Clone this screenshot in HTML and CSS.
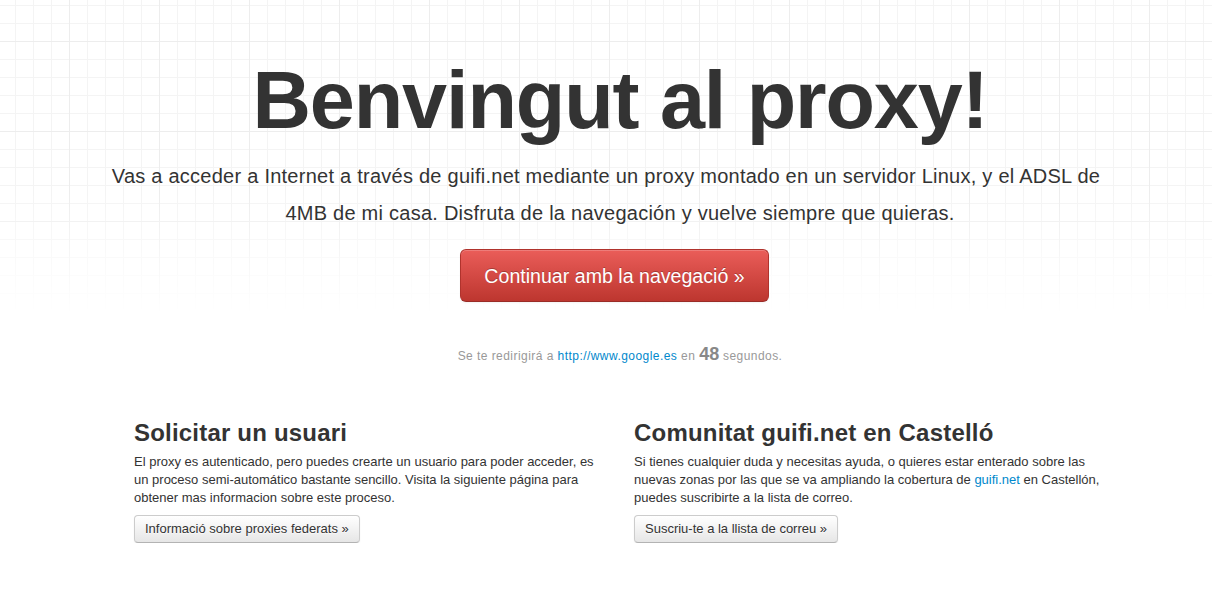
FILE: index.html
```html
<!DOCTYPE html>
<html lang="ca">
<head>
<meta charset="utf-8">
<title>Benvingut al proxy!</title>
<link rel="stylesheet" href="styles.css">
</head>
<body>
<header class="masthead">
  <h1 class="masthead-title">Benvingut al proxy!</h1>
  <p class="masthead-lead">Vas a acceder a Internet a través de guifi.net mediante un proxy montado en un servidor Linux, y el ADSL de 4MB de mi casa. Disfruta de la navegación y vuelve siempre que quieras.</p>
  <a class="btn-danger-large" href="#">Continuar amb la navegació »</a>
  <p class="redirect">Se te redirigirá a <a class="link" href="#">http://www.google.es</a> en <strong class="countdown">48</strong> segundos.</p>
</header>
<section class="features">
  <div class="feature">
    <h2 class="feature-title">Solicitar un usuari</h2>
    <p class="feature-text">El proxy es autenticado, pero puedes crearte un usuario para poder acceder, es un proceso semi-automático bastante sencillo. Visita la siguiente página para obtener mas informacion sobre este proceso.</p>
    <a class="btn" href="#">Informació sobre proxies federats »</a>
  </div>
  <div class="feature">
    <h2 class="feature-title">Comunitat guifi.net en Castelló</h2>
    <p class="feature-text">Si tienes cualquier duda y necesitas ayuda, o quieres estar enterado sobre las nuevas zonas por las que se va ampliando la cobertura de <a class="link" href="#">guifi.net</a> en Castellón, puedes suscribirte a la lista de correo.</p>
    <a class="btn" href="#">Suscriu-te a la llista de correu »</a>
  </div>
</section>
</body>
</html>
```
FILE: styles.css
```css
html, body {
  margin: 0;
  padding: 0;
}

body {
  font-family: "Liberation Sans", Arial, sans-serif;
  font-size: 13px;
  line-height: 18px;
  color: #333;
  background: #fff;
}

.masthead {
  position: relative;
  padding: 60px 0 0 28px;
  text-align: center;
}

.masthead::before {
  content: "";
  position: absolute;
  left: 0;
  top: 0;
  right: 0;
  height: 320px;
  z-index: -1;
  background-image:
    linear-gradient(to right, #ededed 1px, transparent 1px),
    linear-gradient(to bottom, #ededed 1px, transparent 1px),
    linear-gradient(to right, #f4f4f4 1px, transparent 1px),
    linear-gradient(to bottom, #f4f4f4 1px, transparent 1px);
  background-size: 90px 90px, 90px 90px, 18px 18px, 18px 18px;
  background-position: 69px 41px, 69px 41px, 15px 5px, 15px 5px;
  -webkit-mask-image: linear-gradient(to bottom, #000 0, #000 190px, transparent 315px);
  mask-image: linear-gradient(to bottom, #000 0, #000 190px, transparent 315px);
}

.masthead-title {
  margin: 0;
  font-size: 81px;
  line-height: 81px;
  font-weight: bold;
  letter-spacing: -1.1px;
  color: #333;
}

.masthead-lead {
  margin: 17px auto 0;
  max-width: 990px;
  font-size: 20px;
  line-height: 37px;
  letter-spacing: 0.25px;
  text-indent: -28px;
  color: #333;
}

.btn-danger-large {
  display: inline-block;
  margin: 17px 11px 0 0;
  padding: 14px 23px 12px;
  font-size: 19.6px;
  line-height: 25px;
  color: #fff;
  text-decoration: none;
  text-shadow: 0 -1px 0 rgba(0, 0, 0, 0.25);
  background-image: linear-gradient(to bottom, #ea5d59, #bd362f);
  border: 1px solid #b0332d;
  border-bottom-color: #9a2c27;
  border-radius: 6px;
  box-shadow: inset 0 1px 0 rgba(255, 255, 255, 0.2), 0 1px 2px rgba(0, 0, 0, 0.05);
}

.redirect {
  margin: 43px 0 0;
  font-size: 12px;
  line-height: 18px;
  letter-spacing: 0.45px;
  color: #999;
}

.countdown {
  font-size: 18px;
  letter-spacing: 0;
  color: #888;
}

.link {
  color: #0088cc;
  text-decoration: none;
}

.features {
  display: grid;
  grid-template-columns: 466px 466px;
  column-gap: 34px;
  margin: 50px 0 0 134px;
}

.feature-title {
  margin: 0;
  font-size: 24px;
  line-height: 36px;
  font-weight: bold;
  letter-spacing: 0.2px;
  color: #333;
}

.feature-text {
  margin: 2px 0 8px;
}

.btn {
  display: inline-block;
  padding: 4px 10px;
  font-size: 13px;
  line-height: 18px;
  color: #333;
  text-decoration: none;
  text-shadow: 0 1px 1px rgba(255, 255, 255, 0.75);
  background-image: linear-gradient(to bottom, #ffffff, #e6e6e6);
  border: 1px solid #ccc;
  border-bottom-color: #b3b3b3;
  border-radius: 4px;
  box-shadow: inset 0 1px 0 rgba(255, 255, 255, 0.2), 0 1px 2px rgba(0, 0, 0, 0.05);
}
```
